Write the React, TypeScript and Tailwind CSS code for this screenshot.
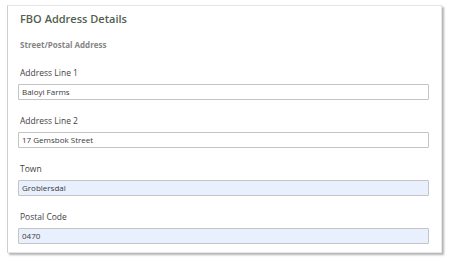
import * as React from 'react';

const fields = [
  { label: 'Address Line 1', value: 'Baloyi Farms', filled: false },
  { label: 'Address Line 2', value: '17 Gemsbok Street', filled: false },
  { label: 'Town', value: 'Groblersdal', filled: true },
  { label: 'Postal Code', value: '0470', filled: true },
];

const Field = ({ label, value, filled }: { label: string; value: string; filled: boolean }) => (
  <div className="flex flex-col">
    <label className="pl-[2px] text-[8.5px] leading-[12px] font-normal text-[#3f3f3f]">{label}</label>
    <div
      className={`mt-[5px] h-[16px] border border-[#c4c4c4] rounded-[1px] px-[3px] flex items-center text-[8px] text-[#3a3a3a] ${
        filled ? 'bg-[#e8f0fe]' : 'bg-white'
      }`}
    >
      {value}
    </div>
  </div>
);

export default function App() {
  return (
    <div className="w-[450px] h-[263px] bg-white pt-[5px] pl-[7px]" style={{ fontFamily: '"Open Sans", sans-serif' }}>
      <div className="w-[435px] h-[248px] bg-white border border-[#e6e6e6] border-l-[#cfcfcf] shadow-[2px_2px_2px_rgba(0,0,0,0.3)] pl-[10px] pr-[12px] pt-[5px] flex flex-col">
        <h3 className="pl-[2px] text-[11px] leading-[16px] font-semibold text-[#52604e]">FBO Address Details</h3>
        <p className="pl-[2px] mt-[12px] text-[8px] leading-[12px] font-bold text-[#858585]">Street/Postal Address</p>
        <div className="mt-[16px] flex flex-col gap-[15px]">
          {fields.map((f) => (
            <Field key={f.label} {...f} />
          ))}
        </div>
      </div>
    </div>
  );
}
